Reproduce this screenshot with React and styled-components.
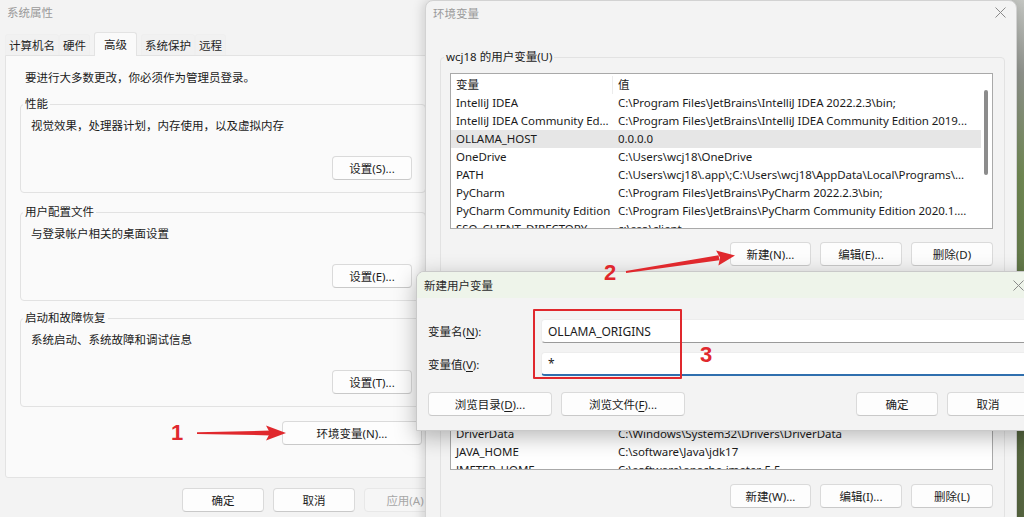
import React from 'react';
import styled, { createGlobalStyle } from 'styled-components';

const GlobalStyle = createGlobalStyle`
  html, body { margin: 0; padding: 0; }
  body {
    font-family: "Noto Sans", "Noto Sans CJK SC", sans-serif;
    font-size: 11.5px;
    color: #1b1b1b;
  }
  #root { width: 1024px; height: 517px; }
  * { box-sizing: border-box; }
`;

const RED = '#e0282d';

const Desktop = styled.div`
  position: relative;
  width: 1024px;
  height: 517px;
  overflow: hidden;
  background: linear-gradient(180deg, #c4c6c2 0%, #8e918b 14%, #6f8752 34%, #5b6f43 70%, #55643f 100%);
`;

const Window = styled.div`
  position: absolute;
  left: ${p => p.$x}px;
  top: ${p => p.$y}px;
  width: ${p => p.$w}px;
  height: ${p => p.$h}px;
  z-index: ${p => p.$z};
  background: #f3f3f3;
  border: 1px solid ${p => p.$border || '#d2d2d2'};
  border-radius: ${p => p.$radius || 0}px ${p => p.$radius || 0}px 0 0;
  box-shadow: ${p => p.$shadow || '0 0 10px rgba(0,0,0,0.16)'};
  display: flex;
  flex-direction: column;
  overflow: hidden;
`;

const TitleBar = styled.div`
  flex: none;
  height: ${p => p.$h}px;
  display: flex;
  align-items: center;
  padding-left: ${p => p.$pl}px;
  color: ${p => p.$color || '#9a9a9a'};
  font-size: 11.5px;
  background: ${p => p.$bg || 'transparent'};
`;

const CloseBox = styled.div`
  margin-left: auto;
  width: ${p => p.$w}px;
  height: 100%;
  display: flex;
  align-items: center;
  justify-content: center;
`;

const CloseIcon = () => (
  <svg width="11" height="11" viewBox="0 0 11 11">
    <path d="M0.5 0.5 L10.5 10.5 M10.5 0.5 L0.5 10.5" stroke="#8a8a8a" strokeWidth="1" fill="none" />
  </svg>
);

/* ---------- System properties window ---------- */

const TabStrip = styled.div`
  flex: none;
  height: 32px;
  display: flex;
  align-items: flex-end;
  padding-left: 5px;
`;

const Tab = styled.div`
  position: relative;
  z-index: ${p => (p.$active ? 1 : 0)};
  height: ${p => (p.$active ? 24 : 21)}px;
  margin: 0 ${p => (p.$active ? 4 : 0)}px ${p => (p.$active ? -1 : 0)}px;
  padding: 0 ${p => (p.$active ? 9 : 3)}px 1px;
  display: flex;
  align-items: center;
  background: ${p => (p.$active ? '#fafafa' : '#f1f1f1')};
  border: 1px solid ${p => (p.$active ? '#e3e3e3' : '#efefef')};
  border-bottom: none;
  border-radius: 3px 3px 0 0;
  color: #1e1e1e;
`;

const Panel = styled.div`
  flex: none;
  height: 423px;
  margin: 0 5px;
  background: #fafafa;
  border: 1px solid #e3e3e3;
  border-radius: 0 3px 3px 3px;
  padding-top: 14px;
  display: flex;
  flex-direction: column;
`;

const Notice = styled.div`
  line-height: 16px;
  padding-left: 19px;
`;

const Group = styled.fieldset`
  margin: ${p => p.$mt}px 25px 0 14px;
  padding: 6px 13px 12px 10px;
  border: 1px solid #e2e2e2;
  border-radius: 4px;
  min-width: 0;
  display: flex;
  flex-direction: column;
`;

const Legend = styled.legend`
  margin-left: ${p => p.$ml ?? -8}px;
  padding: 0 2px;
  line-height: 16px;
`;

const GroupText = styled.div`
  line-height: 16px;
`;

const Actions = styled.div`
  display: flex;
  justify-content: flex-end;
  gap: 9px;
  margin-top: ${p => p.$mt || 0}px;
  margin-right: ${p => p.$mr || 0}px;
`;

const Btn = styled.button`
  flex: none;
  width: ${p => p.$w || 82}px;
  height: 24px;
  padding: 0;
  font: inherit;
  font-size: 11.5px;
  color: ${p => (p.disabled ? '#a6a6a6' : '#1b1b1b')};
  background: ${p => (p.disabled ? '#f6f6f6' : '#fdfdfd')};
  border: 1px solid ${p => (p.disabled ? '#e8e8e8' : '#dadada')};
  border-bottom-color: ${p => (p.disabled ? '#e8e8e8' : '#c9c9c9')};
  border-radius: 4px;
  u { text-decoration: underline; text-underline-offset: 2px; }
`;

const Spacer = styled.div`
  flex: 1;
`;

const Footer = styled.div`
  flex: none;
  display: flex;
  justify-content: flex-end;
  gap: 9px;
  padding: 10px 11px 0 0;
`;

/* ---------- Environment variables window ---------- */

const EnvBody = styled.div`
  flex: 1;
  padding-top: 25px;
  display: flex;
  flex-direction: column;
`;

const VarGroup = styled.fieldset`
  margin: ${p => p.$mt || 0}px 11px 0 14px;
  padding: 8px 11px 11px 9px;
  border: 1px solid #e2e2e2;
  border-radius: 4px;
  min-width: 0;
  display: flex;
  flex-direction: column;
`;

const ListBox = styled.div`
  flex: none;
  height: ${p => p.$h}px;
  background: #ffffff;
  border: 1px solid #a9a9a9;
  display: flex;
  overflow: hidden;
`;

const Rows = styled.div`
  flex: 1;
  min-width: 0;
  padding-top: 2px;
`;

const Row = styled.div`
  display: grid;
  grid-template-columns: 162px 1fr;
  height: 18px;
  align-items: center;
  background: ${p => (p.$sel ? '#e6e6e6' : 'transparent')};
  font-size: 11.5px;
  letter-spacing: -0.06px;
`;

const Cell = styled.div`
  padding-left: 5px;
  white-space: nowrap;
  overflow: hidden;
  line-height: 18px;
  border-right: ${p => (p.$divider ? '1px solid #ececec' : 'none')};
`;

const ScrollTrack = styled.div`
  flex: none;
  width: 11px;
  padding: 16px 0 0 3px;
`;

const Thumb = styled.div`
  width: 4px;
  height: 85px;
  border-radius: 2px;
  background: #8c8c8c;
`;

/* ---------- New variable dialog ---------- */

const DialogBody = styled.div`
  flex: 1;
  padding: 21px 12px 0 11px;
  display: flex;
  flex-direction: column;
  gap: 9px;
`;

const FieldRow = styled.label`
  display: flex;
  align-items: center;
  height: 24px;
`;

const FieldLabel = styled.span`
  flex: none;
  width: 113px;
  u { text-decoration: underline; text-underline-offset: 2px; }
`;

const Field = styled.input`
  flex: 1;
  min-width: 0;
  height: 24px;
  padding: 0 6px;
  font: inherit;
  font-size: 12px;
  color: #1b1b1b;
  background: #ffffff;
  border: 1px solid #ededed;
  border-bottom: ${p => (p.$focus ? '2px solid #2f6fae' : '1px solid #9a9a9a')};
  border-radius: 4px;
  outline: none;
`;

const DialogActions = styled.div`
  display: flex;
  gap: 9px;
  margin-top: 7px;
`;

/* ---------- Annotations (overlay) ---------- */

const Marker = styled.div`
  position: absolute;
  left: ${p => p.$x}px;
  top: ${p => p.$y}px;
  transform: translate(-50%, -50%);
  z-index: 10;
  font-family: "Liberation Sans", "Noto Sans", sans-serif;
  font-weight: 700;
  font-size: 22px;
  line-height: 1;
  color: ${RED};
`;

const RedBox = styled.div`
  position: absolute;
  left: 533px;
  top: 309px;
  width: 149px;
  height: 70px;
  border: 2px solid ${RED};
  border-radius: 1px;
  z-index: 10;
`;

const ArrowLayer = styled.svg`
  position: absolute;
  left: 0;
  top: 0;
  z-index: 10;
  pointer-events: none;
`;

/* ---------- Data ---------- */

const tabs = ['计算机名', '硬件', '高级', '系统保护', '远程'];

const groups = [
  { title: '性能', text: '视觉效果，处理器计划，内存使用，以及虚拟内存', btn: '设置(S)...', mt: 10 },
  { title: '用户配置文件', text: '与登录帐户相关的桌面设置', btn: '设置(E)...', mt: 11 },
  { title: '启动和故障恢复', text: '系统启动、系统故障和调试信息', btn: '设置(T)...', mt: 9 },
];

const userVars = [
  ['IntelliJ IDEA', 'C:\\Program Files\\JetBrains\\IntelliJ IDEA 2022.2.3\\bin;'],
  ['IntelliJ IDEA Community Ed...', 'C:\\Program Files\\JetBrains\\IntelliJ IDEA Community Edition 2019...'],
  ['OLLAMA_HOST', '0.0.0.0', true],
  ['OneDrive', 'C:\\Users\\wcj18\\OneDrive'],
  ['PATH', 'C:\\Users\\wcj18\\.app\\;C:\\Users\\wcj18\\AppData\\Local\\Programs\\...'],
  ['PyCharm', 'C:\\Program Files\\JetBrains\\PyCharm 2022.2.3\\bin;'],
  ['PyCharm Community Edition', 'C:\\Program Files\\JetBrains\\PyCharm Community Edition 2020.1....'],
  ['SSO_CLIENT_DIRECTORY', 'c:\\sso\\client'],
];

const systemVars = [
  ['ChocolateyInstall', 'C:\\ProgramData\\chocolatey'],
  ['ComSpec', 'C:\\Windows\\system32\\cmd.exe'],
  ['CUDA_PATH', 'C:\\Program Files\\NVIDIA GPU Computing Toolkit\\CUDA\\v11.8'],
  ['CUDA_PATH_V11_8', 'C:\\Program Files\\NVIDIA GPU Computing Toolkit\\CUDA\\v11.8'],
  ['DASHSCOPE_API_KEY', 'sk-********'],
  ['DriverData', 'C:\\Windows\\System32\\Drivers\\DriverData'],
  ['JAVA_HOME', 'C:\\software\\Java\\jdk17'],
  ['JMETER_HOME', 'C:\\software\\apache-jmeter-5.5'],
];

function VarList({ items, height, scroll }) {
  return (
    <ListBox $h={height}>
      <Rows>
        <Row>
          <Cell $divider>变量</Cell>
          <Cell>值</Cell>
        </Row>
        {items.map(([k, v, sel]) => (
          <Row key={k} $sel={sel}>
            <Cell>{k}</Cell>
            <Cell>{v}</Cell>
          </Row>
        ))}
      </Rows>
      <ScrollTrack>{scroll && <Thumb />}</ScrollTrack>
    </ListBox>
  );
}

export default function App() {
  return (
    <>
      <GlobalStyle />
      <Desktop>
        {/* 系统属性 */}
        <Window $x={-1} $y={-1} $w={459} $h={540} $z={1} $border="#dcdcdc">
          <TitleBar $h={23} $pl={7}>系统属性</TitleBar>
          <TabStrip>
            {tabs.map(t => (
              <Tab key={t} $active={t === '高级'}>{t}</Tab>
            ))}
          </TabStrip>
          <Panel>
            <Notice>要进行大多数更改，你必须作为管理员登录。</Notice>
            {groups.map(g => (
              <Group key={g.title} $mt={g.mt}>
                <Legend>{g.title}</Legend>
                <GroupText>{g.text}</GroupText>
                <Actions $mt={22}>
                  <Btn $w={80}>{g.btn}</Btn>
                </Actions>
              </Group>
            ))}
            <Actions $mt={14} $mr={29}>
              <Btn $w={140}>环境变量(N)...</Btn>
            </Actions>
          </Panel>
          <Footer>
            <Btn>确定</Btn>
            <Btn>取消</Btn>
            <Btn disabled>应用(A)</Btn>
          </Footer>
        </Window>

        {/* 环境变量 */}
        <Window $x={425} $y={0} $w={592} $h={560} $z={2} $radius={8} $shadow="-2px 0 12px rgba(0,0,0,0.16)">
          <TitleBar $h={23} $pl={7}>
            环境变量
            <CloseBox $w={32}><CloseIcon /></CloseBox>
          </TitleBar>
          <EnvBody>
            <VarGroup>
              <Legend $ml={-6}>wcj18 的用户变量(U)</Legend>
              <VarList items={userVars} height={156} scroll />
              <Actions $mt={13}>
                <Btn $w={81}>新建(N)...</Btn>
                <Btn>编辑(E)...</Btn>
                <Btn>删除(D)</Btn>
              </Actions>
            </VarGroup>
            <VarGroup $mt={12}>
              <Legend $ml={-6}>系统变量(S)</Legend>
              <VarList items={systemVars} height={156} />
              <Actions $mt={14}>
                <Btn $w={81}>新建(W)...</Btn>
                <Btn>编辑(I)...</Btn>
                <Btn>删除(L)</Btn>
              </Actions>
            </VarGroup>
          </EnvBody>
        </Window>

        {/* 新建用户变量 */}
        <Window
          $x={416}
          $y={271}
          $w={626}
          $h={160}
          $z={3}
          $radius={8}
          $border="#c9c9c9"
          $shadow="0 6px 22px rgba(0,0,0,0.28)"
        >
          <TitleBar $h={26} $pl={7} $color="#2a2a2a" $bg="#eef4ea">
            新建用户变量
            <CloseBox $w={46}><CloseIcon /></CloseBox>
          </TitleBar>
          <DialogBody>
            <FieldRow>
              <FieldLabel>变量名(<u>N</u>):</FieldLabel>
              <Field readOnly value="OLLAMA_ORIGINS" />
            </FieldRow>
            <FieldRow>
              <FieldLabel>变量值(<u>V</u>):</FieldLabel>
              <Field readOnly value="*" $focus />
            </FieldRow>
            <DialogActions>
              <Btn $w={124}>浏览目录(<u>D</u>)...</Btn>
              <Btn $w={124}>浏览文件(<u>F</u>)...</Btn>
              <Spacer />
              <Btn>确定</Btn>
              <Btn>取消</Btn>
            </DialogActions>
          </DialogBody>
        </Window>

        {/* annotations */}
        <ArrowLayer width="1024" height="517" viewBox="0 0 1024 517">
          <path d="M197 432.3 L271 430.6 L271 435.4 L197 433.9 Z" fill={RED} />
          <path d="M266 425.5 L286 433 L266 440.5 L270 433 Z" fill={RED} />
          <path d="M626.1 273 L625.9 271 L718.6 255.3 L719.4 260.3 Z" fill={RED} />
          <path d="M716.1 250.4 L735 255.6 L718.4 265.4 L720 257.6 Z" fill={RED} />
        </ArrowLayer>
        <Marker $x={177} $y={433}>1</Marker>
        <Marker $x={610} $y={273}>2</Marker>
        <Marker $x={706} $y={355}>3</Marker>
        <RedBox />
      </Desktop>
    </>
  );
}
